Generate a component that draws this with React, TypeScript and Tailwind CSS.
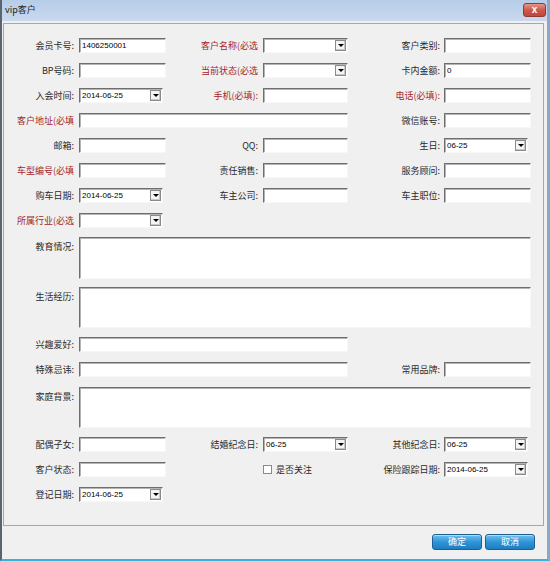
import React from 'react';

const cjk = { fontFamily: '"Noto Sans CJK SC", "Liberation Sans", sans-serif' };
const latin = { fontFamily: '"Liberation Sans", "Noto Sans CJK SC", sans-serif' };

function Label({ w, red, top, children }: { w: number; red?: boolean; top?: boolean; children: React.ReactNode }) {
  return (
    <div
      style={{ width: w, ...cjk }}
      className={`shrink-0 text-right text-[9px] leading-[15px] whitespace-nowrap ${red ? 'text-[#a3262a]' : 'text-[#2a2a2a]'} ${top ? 'self-start pt-[2px]' : ''}`}
    >
      {children}
    </div>
  );
}

function Box({ w, h = 15, value }: { w: number; h?: number; value?: string }) {
  return (
    <div
      style={{ width: w, height: h, ...latin }}
      className="shrink-0 bg-white border-t border-l border-[#6e6e6e] border-r border-b border-r-[#f7f7f7] border-b-[#f7f7f7] shadow-[inset_1px_1px_0_#b4b4b4] pl-[2px] text-[8px] leading-[13px] text-black"
    >
      {value}
    </div>
  );
}

function Combo({ w, value }: { w: number; value?: string }) {
  return (
    <div
      style={{ width: w, ...latin }}
      className="shrink-0 h-[15px] flex items-center justify-between bg-white border-t border-l border-[#6e6e6e] border-r border-b border-r-[#f7f7f7] border-b-[#f7f7f7] shadow-[inset_1px_1px_0_#b4b4b4] pl-[2px] pr-[1px] text-[8px] text-black"
    >
      <span className="leading-[13px]">{value}</span>
      <div className="w-[11px] h-[11px] flex items-center justify-center bg-[#f4f4f4] border border-[#8a8a8a] shadow-[inset_-1px_-1px_0_#c8c8c8]">
        <div className="w-0 h-0 border-l-[3px] border-r-[3px] border-t-[3px] border-l-transparent border-r-transparent border-t-black" />
      </div>
    </div>
  );
}

function Row({ children, h = 15, className = '' }: { children: React.ReactNode; h?: number; className?: string }) {
  return (
    <div style={{ height: h }} className={`flex items-center ${className}`}>
      {children}
    </div>
  );
}

function Gap({ w }: { w: number }) {
  return <div style={{ width: w }} className="shrink-0" />;
}

function Button({ children }: { children: React.ReactNode }) {
  return (
    <div
      style={cjk}
      className="w-[50px] h-[16px] flex items-center justify-center rounded-[3px] border border-[#1d5f93] bg-linear-to-b from-[#6cc0ef] via-[#2f95d6] to-[#1d7dc0] text-white text-[9px] shadow-[inset_0_1px_0_#a9dcf7]"
    >
      {children}
    </div>
  );
}

export default function App() {
  return (
    <div className="w-[550px] h-[561px] flex flex-col bg-[#f0f0f0] border-l-2 border-l-[#5a6571] border-r-[3px] border-r-[#8aa9c8] border-b-2 border-b-[#38b3df]">
      <div className="h-[21px] flex items-start justify-between bg-linear-to-b from-[#b6cde8] to-[#cad9ed]">
        <span style={cjk} className="pl-[3px] pt-[4px] text-[9px] leading-[12px] text-[#1e1e1e]">
          vip客户
        </span>
        <div className="mt-[3px] mr-[1px] w-[23px] h-[14px] flex items-center justify-center rounded-[3px] border border-[#8f3a32] bg-linear-to-b from-[#e0968a] via-[#cc5a4c] to-[#c0473a]">
          <span style={latin} className="text-white text-[10px] font-bold leading-none">x</span>
        </div>
      </div>

      <div className="mt-[2px] ml-[1px] mr-[3px] h-[503px] border border-[#a7a7a7] pt-[14px] flex flex-col gap-[10px]">
        <Row>
          <Label w={70}>会员卡号:</Label><Gap w={5} /><Box w={87} value="1406250001" />
          <Label w={92} red>客户名称(必选</Label><Gap w={5} /><Combo w={85} />
          <Label w={92}>客户类别:</Label><Gap w={4} /><Box w={87} />
        </Row>
        <Row>
          <Label w={70}>BP号码:</Label><Gap w={5} /><Box w={87} />
          <Label w={92} red>当前状态(必选</Label><Gap w={5} /><Combo w={85} />
          <Label w={92}>卡内金额:</Label><Gap w={4} /><Box w={87} value="0" />
        </Row>
        <Row>
          <Label w={70}>入会时间:</Label><Gap w={5} /><Combo w={84} value="2014-06-25" /><Gap w={3} />
          <Label w={92} red>手机(必填):</Label><Gap w={5} /><Box w={85} />
          <Label w={92} red>电话(必填):</Label><Gap w={4} /><Box w={87} />
        </Row>
        <Row>
          <Label w={70} red>客户地址(必填</Label><Gap w={5} /><Box w={269} />
          <Label w={92}>微信账号:</Label><Gap w={4} /><Box w={87} />
        </Row>
        <Row>
          <Label w={70}>邮箱:</Label><Gap w={5} /><Box w={87} />
          <Label w={92}>QQ:</Label><Gap w={5} /><Box w={85} />
          <Label w={92}>生日:</Label><Gap w={4} /><Combo w={84} value="06-25" />
        </Row>
        <Row>
          <Label w={70} red>车型编号(必填</Label><Gap w={5} /><Box w={87} />
          <Label w={92}>责任销售:</Label><Gap w={5} /><Box w={85} />
          <Label w={92}>服务顾问:</Label><Gap w={4} /><Box w={87} />
        </Row>
        <Row>
          <Label w={70}>购车日期:</Label><Gap w={5} /><Combo w={84} value="2014-06-25" /><Gap w={3} />
          <Label w={92}>车主公司:</Label><Gap w={5} /><Box w={85} />
          <Label w={92}>车主职位:</Label><Gap w={4} /><Box w={87} />
        </Row>
        <Row>
          <Label w={70} red>所属行业(必选</Label><Gap w={5} /><Combo w={84} />
        </Row>
        <Row h={42} className="-mt-[1px]">
          <Label w={70} top>教育情况:</Label><Gap w={5} /><Box w={452} h={42} />
        </Row>
        <Row h={41} className="-mt-[2px]">
          <Label w={70} top>生活经历:</Label><Gap w={5} /><Box w={452} h={41} />
        </Row>
        <Row className="-mt-[1px]">
          <Label w={70}>兴趣爱好:</Label><Gap w={5} /><Box w={269} />
        </Row>
        <Row>
          <Label w={70}>特殊忌讳:</Label><Gap w={5} /><Box w={269} />
          <Label w={92}>常用品牌:</Label><Gap w={4} /><Box w={87} />
        </Row>
        <Row h={41}>
          <Label w={70} top>家庭背景:</Label><Gap w={5} /><Box w={452} h={41} />
        </Row>
        <Row className="-mt-[1px]">
          <Label w={70}>配偶子女:</Label><Gap w={5} /><Box w={87} />
          <Label w={92}>结婚纪念日:</Label><Gap w={5} /><Combo w={85} value="06-25" />
          <Label w={92}>其他纪念日:</Label><Gap w={4} /><Combo w={84} value="06-25" />
        </Row>
        <Row>
          <Label w={70}>客户状态:</Label><Gap w={5} /><Box w={87} />
          <Gap w={97} />
          <div className="w-[85px] shrink-0 flex items-center gap-[4px]">
            <div className="w-[9px] h-[9px] bg-white border border-[#8a8a8a]" />
            <span style={cjk} className="text-[9px] text-[#2a2a2a] leading-[15px]">是否关注</span>
          </div>
          <Label w={92}>保险跟踪日期:</Label><Gap w={4} /><Combo w={84} value="2014-06-25" />
        </Row>
        <Row>
          <Label w={70}>登记日期:</Label><Gap w={5} /><Combo w={84} value="2014-06-25" />
        </Row>
      </div>

      <div className="flex-1 flex items-start justify-end gap-[3px] pt-[8px] pr-[12px]">
        <Button>确定</Button>
        <Button>取消</Button>
      </div>
    </div>
  );
}
